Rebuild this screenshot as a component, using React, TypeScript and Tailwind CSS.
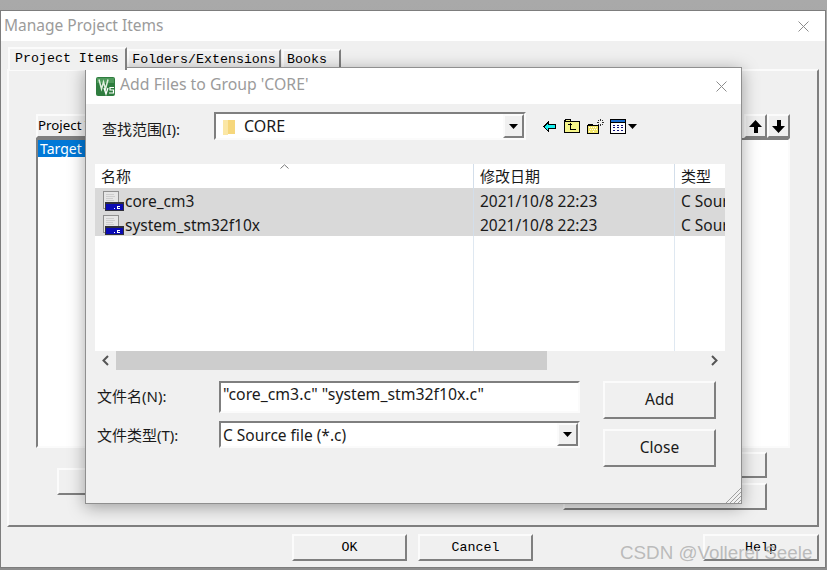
import type { ReactNode } from "react";

const UI_FONT = "font-['Noto_Sans','Noto_Sans_CJK_SC',sans-serif]";
const MONO_FONT = "font-['Liberation_Mono',monospace]";
const RAISED = "border-2 border-t-[#fbfbfb] border-l-[#fbfbfb] border-r-[#7f7f7f] border-b-[#7f7f7f] bg-[#f0f0f0]";
const SUNKEN = "border-2 border-t-[#7f7f7f] border-l-[#7f7f7f] border-r-[#fbfbfb] border-b-[#fbfbfb] bg-white";

function CloseIcon({ color }: { color: string }) {
  return (
    <svg width="11" height="11" viewBox="0 0 11 11" fill="none" stroke={color} strokeWidth="1">
      <path d="M0.5 0.5 10.5 10.5M10.5 0.5 0.5 10.5" />
    </svg>
  );
}

function KeilLogo() {
  return (
    <svg width="19" height="19" viewBox="0 0 19 19" className="shrink-0">
      <rect width="19" height="19" rx="2" fill="#2f7d3f" />
      <path d="M1 1h17v5H1z" fill="#4f9a5c" />
      <path d="M3 2.5 5.5 12 7.5 5 9.5 12 12 2.5" fill="none" stroke="#dfeedd" strokeWidth="1.5" />
      <path d="M8 11 10 17 12 11" fill="none" stroke="#fff" strokeWidth="1.3" />
      <path d="M18 10.5h-4v2.5h3.5v3H13" fill="none" stroke="#fff" strokeWidth="1.2" />
    </svg>
  );
}

function ComboArrow({ className }: { className: string }) {
  return (
    <div className={`flex items-center justify-center ${RAISED} ${className}`}>
      <svg width="9" height="5" viewBox="0 0 9 5">
        <path d="M0 0h9L4.5 5z" fill="#000" />
      </svg>
    </div>
  );
}

function FileIcon() {
  return (
    <svg width="21" height="20" viewBox="0 0 21 20" shapeRendering="crispEdges" className="shrink-0">
      <rect x="0.5" y="0.5" width="15" height="17" fill="#e6e6e6" stroke="#8f8f8f" />
      <path d="M3 3h8v1H3zM3 5h9v1H3zM3 7h7v1H3zM3 9h8v1H3z" fill="#cdcdcd" />
      <rect x="2" y="11" width="19" height="9" fill="#30303a" />
      <rect x="3" y="13" width="17" height="6" fill="#0a0ab4" />
      <path d="M11 17h1v1h-1zM14 15h3v1h-2v1h2v1h-3z" fill="#fff" />
    </svg>
  );
}

function BackIcon() {
  return (
    <svg width="13" height="11" viewBox="0 0 13 11" shapeRendering="crispEdges">
      <path d="M0 5h1V4h1V3h1V2h1V1h1V0h1v3h7v5H6v3H5v-1H4V9H3V8H2V7H1V6H0z" fill="#000" />
      <path d="M2 5h1V4h1V3h1V2h0v2h7v3H5v2H4V8H3V7H2z" fill="#19f0f0" />
    </svg>
  );
}

function FolderUpIcon() {
  return (
    <svg width="16" height="14" viewBox="0 0 16 14" shapeRendering="crispEdges">
      <path d="M1 0h6v2h9v12H0V1h1z" fill="#000" />
      <path d="M1 3h14v10H1z" fill="#f6f68a" />
      <path d="M2 1h4v1H2z" fill="#f6f68a" />
      <path d="M6 4h1v1h1v1H7v4h5v1H6V6H5V5H4v1h1V5h1z" fill="#000" />
    </svg>
  );
}

function NewFolderIcon() {
  return (
    <svg width="17" height="15" viewBox="0 0 17 15" shapeRendering="crispEdges">
      <path d="M1 5h5v1h6v9H0V6h1z" fill="#000" />
      <path d="M1 7h10v7H1z" fill="#f3e76a" />
      <path d="M2 8h1v1H2zM4 8h1v1H4zM6 8h1v1H6zM8 8h1v1H8zM3 10h1v1H3zM5 10h1v1H5zM7 10h1v1H7zM9 10h1v1H9zM2 12h1v1H2zM6 12h1v1H6z" fill="#fff" />
      <path d="M13 0h1v2h-1zM13 5h1v2h-1zM10 3h2v1h-2zM15 3h2v1h-2zM11 1h1v1h-1zM15 1h1v1h-1zM11 5h1v1h-1zM15 5h1v1h-1z" fill="#333" />
    </svg>
  );
}

function DetailsIcon() {
  return (
    <svg width="16" height="15" viewBox="0 0 16 15" shapeRendering="crispEdges">
      <rect width="16" height="15" fill="#000" />
      <rect x="1" y="1" width="14" height="2" fill="#1b6fd0" />
      <rect x="1" y="4" width="14" height="10" fill="#fff" />
      <path d="M3 6h2v1H3zM7 6h2v1H7zM11 6h2v1h-2zM3 8h2v1H3zM7 8h2v1H7zM11 8h2v1h-2zM3 11h2v1H3zM7 11h2v1H7zM11 11h2v1h-2z" fill="#12127a" />
    </svg>
  );
}

function DarkButton({ children, className }: { children?: ReactNode; className: string }) {
  return (
    <div className={`flex items-center justify-center text-[13.3px] text-black ${MONO_FONT} ${RAISED} ${className}`}>
      {children}
    </div>
  );
}

function FileRow({ name }: { name: string }) {
  return (
    <div className="grid h-[24px] grid-cols-[379px_201px_50px] bg-[#d9d9d9] text-[15.5px] text-[#1a1a1a]">
      <div className="flex items-center gap-px overflow-hidden border-r border-[#d3deea] pl-2">
        <FileIcon />
        <span className="pt-[2px]">{name}</span>
      </div>
      <div className="flex items-center border-r border-[#d3deea] pl-[6px] pt-[2px]">2021/10/8 22:23</div>
      <div className="flex items-center overflow-hidden whitespace-nowrap pl-[6px] pt-[2px]">C Source</div>
    </div>
  );
}

function AddFilesDialog() {
  return (
    <div className={`absolute left-[85px] top-[67px] flex h-[437px] w-[657px] flex-col border border-[#8f8f8f] bg-[#f0f0f0] shadow-[0_3px_16px_rgba(0,0,0,0.35)] ${UI_FONT}`}>
      <div className="flex h-[36px] shrink-0 items-center bg-white pl-[10px] pr-[14px]">
        <KeilLogo />
        <span className="ml-[5px] pb-[2px] text-[15.8px] text-[#9b9b9b]">Add Files to Group 'CORE'</span>
        <div className="ml-auto flex">
          <CloseIcon color="#8c8c8c" />
        </div>
      </div>

      <div className="mt-[8px] flex h-[28px] items-center pl-[16px]">
        <span className="w-[112px] pt-[6px] text-[15px] text-[#1a1a1a]">查找范围(I):</span>
        <div className={`flex h-[28px] w-[312px] items-center ${SUNKEN}`}>
          <svg width="13" height="17" viewBox="0 0 13 17" className="ml-[7px] shrink-0">
            <path d="M0 2h12v14H4l-4 1z" fill="#f6d77c" />
            <path d="M0 2h5v15H0z" fill="#fbe7a6" />
          </svg>
          <span className="ml-[8px] text-[16px] text-[#1a1a1a]">CORE</span>
          <ComboArrow className="ml-auto h-full w-[21px]" />
        </div>
        <div className="ml-[17px] flex items-center">
          <BackIcon />
          <div className="ml-[8px]"><FolderUpIcon /></div>
          <div className="ml-[7px]"><NewFolderIcon /></div>
          <div className="ml-[6px]"><DetailsIcon /></div>
          <svg width="9" height="5" viewBox="0 0 9 5" className="ml-[2px]">
            <path d="M0 0h9L4.5 5z" fill="#000" />
          </svg>
        </div>
      </div>

      <div className="ml-[9px] mt-[24px] flex h-[187px] w-[630px] flex-col bg-white">
        <div className="relative grid h-[24px] shrink-0 grid-cols-[379px_201px_50px] text-[15px] text-[#1a1a1a]">
          <div className="flex items-center border-r border-[#d3deea] pl-[6px]">名称</div>
          <div className="flex items-center border-r border-[#d3deea] pl-[6px]">修改日期</div>
          <div className="flex items-center pl-[6px]">类型</div>
          <svg width="9" height="5" viewBox="0 0 9 5" className="absolute left-[185px] top-0" fill="none" stroke="#777">
            <path d="M0.5 4.5 4.5 0.8 8.5 4.5" />
          </svg>
        </div>
        <FileRow name="core_cm3" />
        <FileRow name="system_stm32f10x" />
        <div className="grid flex-1 grid-cols-[379px_201px_50px]">
          <div className="border-r border-[#dfe8f1]" />
          <div className="border-r border-[#dfe8f1]" />
          <div />
        </div>
      </div>

      <div className="ml-[9px] flex h-[19px] w-[630px] items-center">
        <div className="flex h-full w-[21px] items-center justify-center">
          <svg width="7" height="11" viewBox="0 0 7 11" fill="none" stroke="#555" strokeWidth="2">
            <path d="M6 1 1.5 5.5 6 10" />
          </svg>
        </div>
        <div className="h-full w-[431px] bg-[#cdcdcd]" />
        <div className="ml-auto flex h-full w-[21px] items-center justify-center">
          <svg width="7" height="11" viewBox="0 0 7 11" fill="none" stroke="#555" strokeWidth="2">
            <path d="M1 1 5.5 5.5 1 10" />
          </svg>
        </div>
      </div>

      <div className="ml-[11px] mt-[11px] flex">
        <div className="flex w-[506px] flex-col">
          <div className="flex h-[32px] items-center">
            <span className="w-[122px] pb-[1px] text-[15px] text-[#1a1a1a]">文件名(N):</span>
            <div className={`flex h-[32px] w-[361px] items-center whitespace-nowrap pb-[4px] pl-[2px] text-[15.8px] text-[#1a1a1a] ${SUNKEN}`}>
              "core_cm3.c" "system_stm32f10x.c"
            </div>
          </div>
          <div className="mt-[8px] flex h-[27px] items-center">
            <span className="w-[122px] pt-[2px] text-[15px] text-[#1a1a1a]">文件类型(T):</span>
            <div className={`flex h-[27px] w-[361px] items-center pl-[2px] text-[15.5px] text-[#1a1a1a] ${SUNKEN}`}>
              <span className="pt-[2px]">C Source file (*.c)</span>
              <ComboArrow className="ml-auto h-full w-[21px]" />
            </div>
          </div>
        </div>
        <div className="flex flex-col gap-[10px]">
          <div className={`flex h-[38px] w-[113px] items-center justify-center text-[15.5px] text-[#1a1a1a] ${RAISED}`}>Add</div>
          <div className={`flex h-[38px] w-[113px] items-center justify-center text-[15.5px] text-[#1a1a1a] ${RAISED}`}>Close</div>
        </div>
      </div>

      <svg width="15" height="15" viewBox="0 0 15 15" className="absolute bottom-0 right-0" stroke="#a0a0a0" fill="none">
        <path d="M0 15 15 0M4 15 15 4M8 15 15 8M12 15 15 12" />
      </svg>
    </div>
  );
}

export default function App() {
  return (
    <div className="relative h-[570px] w-[827px] overflow-hidden bg-gradient-to-b from-[#a9a9a9] to-[#8d8d8d] pt-[10px]">
      <div className={`flex h-[558px] w-[826px] flex-col border border-[#7d7d7d] bg-[#f0f0f0] ${MONO_FONT}`}>
        <div className="flex h-[30px] shrink-0 items-center justify-between bg-white pl-[3px] pr-[16px]">
          <span className={`text-[15.5px] text-[#9b9b9b] ${UI_FONT}`}>Manage Project Items</span>
          <CloseIcon color="#8c8c8c" />
        </div>

        <div className="flex h-[28px] shrink-0 items-end pl-[7px] text-[13.3px] text-black">
          <div className="z-10 -mb-px flex h-[23px] w-[119px] items-center border-r-2 border-t-2 border-l-2 border-r-[#7f7f7f] border-t-[#fbfbfb] border-l-[#fbfbfb] bg-[#f0f0f0] pb-[2px] pl-[5px]">
            Project Items
          </div>
          <div className="flex h-[20px] w-[154px] items-center justify-center border-r-2 border-t-2 border-l-2 border-r-[#7f7f7f] border-t-[#fbfbfb] border-l-[#fbfbfb]">
            Folders/Extensions
          </div>
          <div className="ml-px flex h-[20px] w-[59px] items-center border-r-2 border-t-2 border-l-2 border-r-[#7f7f7f] border-t-[#fbfbfb] border-l-[#fbfbfb] pl-[3px]">
            Books
          </div>
        </div>

        <div className="ml-[6px] flex h-[458px] w-[812px] shrink-0 flex-col border-2 border-t-[#fbfbfb] border-l-[#fbfbfb] border-r-[#7f7f7f] border-b-[#7f7f7f] pl-[27px] pt-[43px]">
          <div className="flex h-[24px] w-[754px] items-stretch justify-between">
            <DarkButton className={`w-[120px] !justify-start ${UI_FONT}`}>Project Targets</DarkButton>
            <div className="flex">
              <DarkButton className="w-[23px]">
                <svg width="13" height="13" viewBox="0 0 13 13"><path d="M6.5 0 13 7H9v6H5V7H0z" fill="#000" /></svg>
              </DarkButton>
              <DarkButton className="w-[23px]">
                <svg width="13" height="13" viewBox="0 0 13 13"><path d="M6.5 13 13 6H9V0H5v6H0z" fill="#000" /></svg>
              </DarkButton>
            </div>
          </div>
          <div className={`h-[310px] w-[754px] ${SUNKEN}`}>
            <div className={`h-[17px] w-[180px] bg-[#0078d7] pl-[2px] text-[14px] leading-[17px] text-white ${UI_FONT}`}>Target 1</div>
          </div>
          <div className="flex w-[754px]">
            <DarkButton className="ml-[21px] mt-[20px] h-[27px] w-[160px]" />
            <div className="ml-auto mr-[23px] flex flex-col gap-[5px] pt-[4px]">
              <DarkButton className="h-[26px] w-[204px]" />
              <DarkButton className="h-[27px] w-[204px]" />
            </div>
          </div>
        </div>

        <div className="relative flex flex-1 items-start pt-[7px]">
          <DarkButton className="ml-[291px] h-[27px] w-[115px]">OK</DarkButton>
          <DarkButton className="ml-[11px] h-[27px] w-[115px]">Cancel</DarkButton>
          <DarkButton className="ml-[170px] h-[27px] w-[116px]">Help</DarkButton>
        </div>
      </div>

      <AddFilesDialog />

      <div className="absolute left-[620px] top-[541px] font-['Liberation_Sans',sans-serif] text-[18.8px] leading-[24px] text-[#b4b4b4]/90">
        CSDN @Vollerei Seele
      </div>
    </div>
  );
}
